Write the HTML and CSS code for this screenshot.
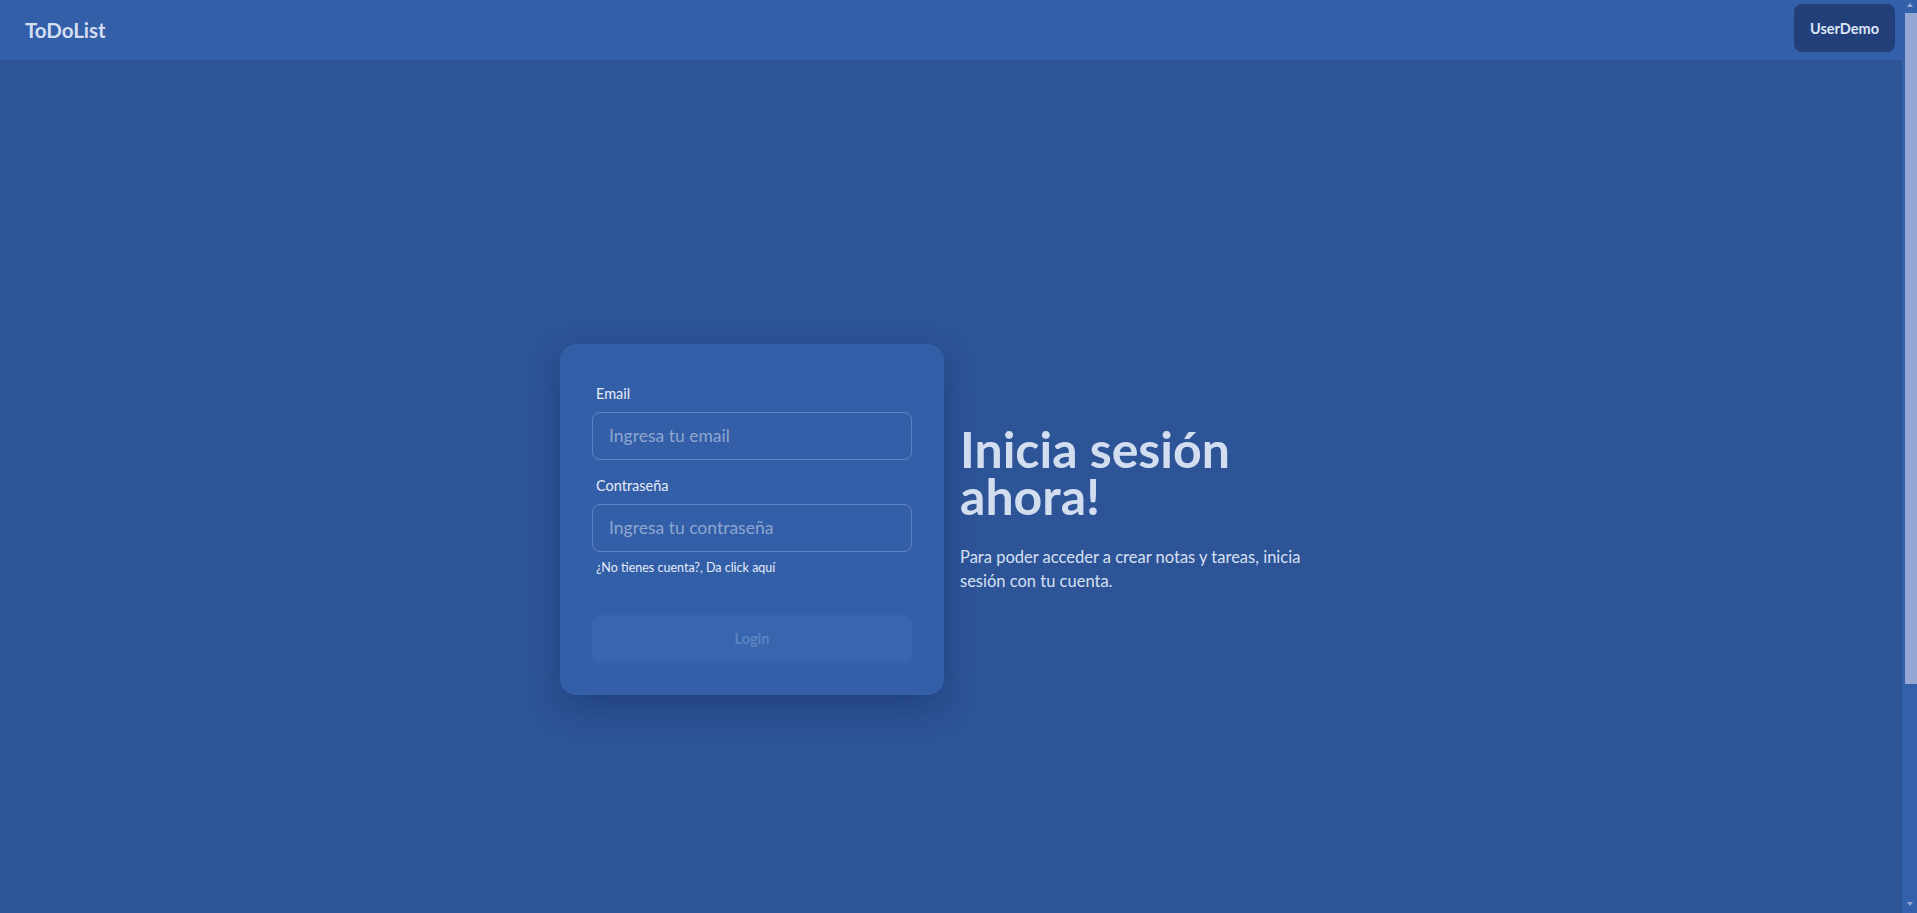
FILE: index.html
```html
<!DOCTYPE html>
<html lang="es">
<head>
<meta charset="utf-8">
<title>ToDoList</title>
<link rel="stylesheet" href="styles.css">
</head>
<body>
<header class="navbar">
  <a class="brand" href="#">ToDoList</a>
  <button class="user-btn" type="button">UserDemo</button>
</header>
<main class="hero">
  <form class="card">
    <div class="field">
      <label class="label" for="email">Email</label>
      <input class="input" id="email" type="email" placeholder="Ingresa tu email">
    </div>
    <div class="field">
      <label class="label" for="pass">Contraseña</label>
      <input class="input" id="pass" type="password" placeholder="Ingresa tu contraseña">
      <a class="register" href="#">¿No tienes cuenta?, Da click aquí</a>
    </div>
    <button class="login-btn" type="button" disabled>Login</button>
  </form>
  <section class="intro">
    <h1 class="title">Inicia sesión ahora!</h1>
    <p class="lead">Para poder acceder a crear notas y tareas, inicia sesión con tu cuenta.</p>
  </section>
</main>
<div class="scrollbar" aria-hidden="true">
  <span class="arrow arrow-up"></span>
  <span class="thumb"></span>
  <span class="arrow arrow-down"></span>
</div>
</body>
</html>
```

FILE: styles.css
```css
html {
  background: #2d5497;
}
* { box-sizing: border-box; }
body {
  margin: 0;
  padding-right: 15px;
  background: #2d5497;
  font-family: Lato, "Noto Sans", sans-serif;
  color: #dfe7f5;
}
.navbar {
  height: 60px;
  background: #335ea8;
  display: flex;
  justify-content: space-between;
  align-items: flex-start;
  padding: 4px 7px 0 25px;
}
.brand {
  color: #d4def2;
  text-decoration: none;
  font-size: 20.5px;
  font-weight: 700;
  line-height: 52px;
}
.user-btn {
  width: 101px;
  height: 48px;
  border: 0;
  border-radius: 8px;
  background: #223f7a;
  color: #dce5f5;
  font-family: inherit;
  font-size: 14.5px;
  font-weight: 700;
}
.hero {
  min-height: 913px;
  display: flex;
  justify-content: center;
  align-items: center;
  gap: 16px;
  padding: 5px 0 0 2px;
}
.card {
  width: 384px;
  padding: 40px 32px 32px;
  border-radius: 16px;
  background: #335ea8;
  box-shadow: 0 12px 30px rgba(15, 35, 80, 0.35);
  display: flex;
  flex-direction: column;
}
.field {
  display: flex;
  flex-direction: column;
  margin-bottom: 16px;
}
.field + .field { margin-bottom: 39px; }
.label {
  font-size: 14.5px;
  line-height: 20px;
  padding-left: 4px;
  margin-bottom: 8px;
  color: #e6ecf7;
}
.input {
  height: 48px;
  padding: 0 16px;
  border: 1px solid rgba(170, 195, 235, 0.35);
  border-radius: 8px;
  background: transparent;
  font-family: inherit;
  font-size: 17.5px;
  color: #e6ecf7;
  outline: none;
}
.input::placeholder { color: #8ea6d0; }
.register {
  margin-top: 8px;
  padding-left: 4px;
  font-size: 12.5px;
  line-height: 16px;
  color: #e6ecf7;
  text-decoration: none;
}
.login-btn {
  height: 48px;
  border: 0;
  border-radius: 8px;
  background: #3766ae;
  color: #5c82c2;
  font-family: inherit;
  font-size: 14.5px;
  font-weight: 700;
}
.intro {
  width: 384px;
  padding-bottom: 20px;
}
.title {
  margin: 0 0 25px;
  font-size: 50px;
  line-height: 47px;
  font-weight: 700;
  color: #d3ddf0;
}
.lead {
  margin: 0;
  max-width: 345px;
  font-size: 16.5px;
  line-height: 24px;
  color: #d6e0f2;
}
.scrollbar {
  position: fixed;
  top: 0;
  right: 0;
  width: 15px;
  height: 100vh;
  background: #3360aa;
}
.thumb {
  position: absolute;
  top: 13px;
  left: 3px;
  right: 0;
  height: 671px;
  background: #95a8d3;
}
.arrow {
  position: absolute;
  left: 5px;
  width: 0;
  height: 0;
  border-left: 3.5px solid transparent;
  border-right: 3.5px solid transparent;
}
.arrow-up {
  top: 3px;
  border-bottom: 4px solid #95a8d3;
}
.arrow-down {
  bottom: 7px;
  border-top: 4px solid #95a8d3;
}
```
